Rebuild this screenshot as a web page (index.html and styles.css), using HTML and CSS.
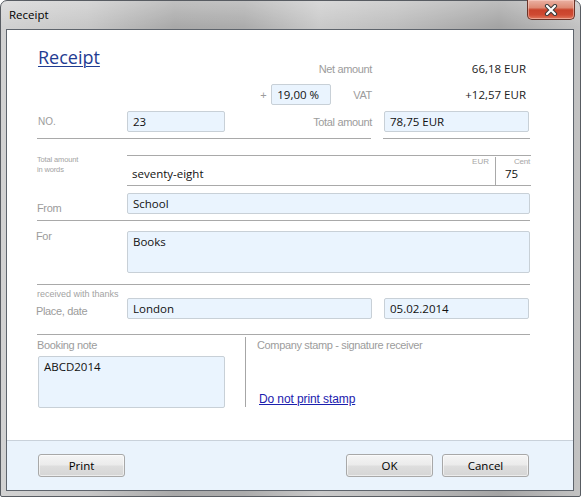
FILE: index.html
```html
<!DOCTYPE html>
<html>
<head>
<meta charset="utf-8">
<title>Receipt</title>
<link rel="stylesheet" href="styles.css">
</head>
<body>
<div class="window">
  <div class="titlebar">
    <span class="title">Receipt</span>
    <button class="close" type="button" aria-label="Close">
      <svg width="14" height="12" viewBox="0 0 14 12">
        <path d="M3 2 L11 10 M11 2 L3 10" stroke="#3b3b3b" stroke-width="4.2" stroke-linecap="round" fill="none"/>
        <path d="M3 2 L11 10 M11 2 L3 10" stroke="#ffffff" stroke-width="2.2" stroke-linecap="round" fill="none"/>
      </svg>
    </button>
  </div>
  <div class="client">
    <div class="main">
      <div class="row r1">
        <div class="left">
          <a class="heading" href="#">Receipt</a>
          <span class="label net">Net amount</span>
        </div>
        <div class="right value">66,18 EUR</div>
      </div>
      <div class="row r2">
        <div class="left">
          <span class="label plus">+</span>
          <div class="field vat-field">19,00 %</div>
          <span class="label vat">VAT</span>
        </div>
        <div class="right value">+12,57 EUR</div>
      </div>
      <div class="row r3">
        <div class="left">
          <span class="label-col no">NO.</span>
          <div class="field no-field">23</div>
          <span class="label total">Total amount</span>
        </div>
        <div class="right"><div class="field total-field">78,75 EUR</div></div>
      </div>
      <div class="row r4">
        <div class="rule rule-left"></div>
        <div class="rule rule-right"></div>
      </div>
      <div class="words">
        <div class="tiny">Total amount<br>in words</div>
        <div class="words-box">
          <div class="words-main">
            <span class="tiny-r">EUR</span>
            <span class="words-text">seventy-eight</span>
          </div>
          <div class="words-cent">
            <span class="tiny-c">Cent</span>
            <span class="words-text">75</span>
          </div>
        </div>
      </div>
      <div class="line-row from-row">
        <span class="label from">From</span>
        <div class="field">School</div>
      </div>
      <div class="rule full r7"></div>
      <div class="line-row for-row">
        <span class="label for">For</span>
        <div class="field tall">Books</div>
      </div>
      <div class="rule full r9"></div>
      <div class="place-row">
        <div class="place-labels">
          <span class="thanks">received with thanks</span>
          <span class="label place">Place, date</span>
        </div>
        <div class="field city">London</div>
        <div class="field date">05.02.2014</div>
      </div>
      <div class="rule full r11"></div>
      <div class="bottom">
        <div class="booking">
          <span class="label">Booking note</span>
          <div class="field note">ABCD2014</div>
        </div>
        <div class="stamp">
          <span class="label">Company stamp - signature receiver</span>
          <a class="stamp-link" href="#">Do not print stamp</a>
        </div>
      </div>
    </div>
    <div class="footer">
      <button class="btn" type="button">Print</button>
      <button class="btn ok" type="button">OK</button>
      <button class="btn" type="button">Cancel</button>
    </div>
  </div>
</div>
</body>
</html>
```
FILE: styles.css
```css
* { box-sizing: border-box; }
html, body { margin: 0; padding: 0; }
body {
  width: 581px;
  height: 497px;
  overflow: hidden;
  background: #ffffff;
  font-family: "Open Sans", "Noto Sans", sans-serif;
}

.window {
  width: 581px;
  height: 497px;
  border: 1px solid #585c62;
  border-radius: 7px 7px 2px 2px;
  padding: 0 6px 5px 5px;
  display: flex;
  flex-direction: column;
  background:
    linear-gradient(180deg, rgba(255,255,255,0.28) 0, rgba(255,255,255,0) 26px),
    linear-gradient(90deg, #d2d2d2 0%, #c7c7c7 15%, #a9a9a9 30%, #acacac 42%, #cacaca 55%, #bebebe 68%, #a4a4a4 86%, #c3c3c3 100%);
}

.titlebar {
  height: 28px;
  flex: none;
  display: flex;
  align-items: center;
  padding-left: 3px;
}
.title {
  font-size: 11.5px;
  line-height: 16px;
  color: #000;
}
.close {
  margin-left: auto;
  margin-right: -1px;
  align-self: flex-start;
  margin-top: -1px;
  width: 48px;
  height: 20px;
  padding: 0;
  border: 1px solid #6a3328;
  border-top: none;
  border-radius: 0 0 5px 5px;
  background: linear-gradient(180deg, #eab1a3 0%, #de8a74 40%, #c9432b 52%, #cf4a32 78%, #e0795d 100%);
  box-shadow: inset 0 0 0 1px rgba(255,220,210,0.45);
  display: flex;
  align-items: center;
  justify-content: center;
}
.close svg { display: block; }

.client {
  height: 462px;
  flex: none;
  border: 1px solid #5e646c;
  background: #ffffff;
  display: flex;
  flex-direction: column;
}

.main {
  height: 410px;
  flex: none;
  padding: 16px 42px 0 30px;
}

.label {
  font-family: "Liberation Sans", Arial, sans-serif;
  font-size: 11px;
  line-height: 14px;
  letter-spacing: -0.35px;
  color: #9c9c9c;
  white-space: nowrap;
}
.value {
  font-size: 11.5px;
  line-height: 14px;
  color: #222;
  text-align: right;
  padding-right: 4px;
  white-space: nowrap;
}

.row { display: flex; gap: 12px; }
.left { width: 335px; display: flex; }
.right { width: 146px; }

.r1 { height: 30px; align-items: flex-end; }
.r1 .left { height: 30px; align-items: flex-end; }
.heading {
  align-self: flex-start;
  font-size: 18px;
  line-height: 22px;
  color: #1f3c92;
  text-decoration: underline;
  text-decoration-thickness: 1px;
  text-underline-offset: 2px;
  margin-left: 1px;
}
.net { margin-left: auto; }

.r2 { height: 21px; margin-top: 8px; align-items: center; }
.r2 .left { justify-content: flex-end; align-items: center; }
.plus { margin-right: 5px; }
.vat-field { width: 60px; }
.vat { margin-left: 22px; }

.r3 { height: 21px; margin-top: 6px; align-items: center; }
.r3 .left { align-items: center; }
.label-col { width: 90px; flex: none; }
.no {
  font-family: "Liberation Sans", Arial, sans-serif;
  font-size: 10px;
  color: #9c9c9c;
  padding-left: 1px;
}
.no-field { width: 98px; flex: none; }
.total { flex: 1; text-align: right; }
.total-field { width: 145px; }

.field {
  height: 21px;
  background: #eaf4fe;
  border: 1px solid #c8d0d7;
  border-radius: 2px;
  padding: 0 4px 0 5px;
  font-size: 11.5px;
  line-height: 19px;
  color: #111;
  white-space: nowrap;
  overflow: hidden;
}
.field.tall {
  height: 42px;
  line-height: 14px;
  padding-top: 3px;
}

.rule { height: 1px; background: #a9a9a9; }
.r4 { margin-top: 6px; height: 1px; }
.rule-left { width: 334px; }
.rule-right { width: 147px; }
.full { width: 493px; }

.words {
  display: grid;
  grid-template-columns: 90px 1fr;
  margin-top: 16px;
}
.tiny {
  font-family: "Liberation Sans", Arial, sans-serif;
  font-size: 7.5px;
  line-height: 10px;
  letter-spacing: -0.15px;
  color: #a3a3a3;
}
.words-box {
  height: 31px;
  border-top: 1px solid #a9a9a9;
  border-bottom: 1px solid #a9a9a9;
  display: flex;
}
.words-main {
  flex: 1;
  display: flex;
  flex-direction: column;
  padding: 1px 6px 0 5px;
}
.tiny-r, .tiny-c {
  font-family: "Liberation Sans", Arial, sans-serif;
  font-size: 8px;
  line-height: 10px;
  color: #a6a6a6;
  white-space: nowrap;
}
.tiny-r { align-self: flex-end; }
.tiny-c { padding-left: 9px; letter-spacing: -0.2px; }
.words-text {
  font-size: 11.5px;
  line-height: 14px;
  color: #111;
}
.words-cent {
  width: 36px;
  flex: none;
  margin-top: 1px;
  border-left: 1px solid #a9a9a9;
  display: flex;
  flex-direction: column;
  padding-left: 9px;
}
.words-cent .tiny-c { margin-left: -9px; padding-left: 18px; }

.line-row {
  display: grid;
  grid-template-columns: 90px 403px;
}
.from-row { margin-top: 7px; }
.from { align-self: end; margin-bottom: -1px; }
.r7 { margin-top: 6px; }
.for-row { margin-top: 10px; }
.for { align-self: start; margin-top: -2px; margin-left: -1px; }
.r9 { margin-top: 11px; }

.place-row {
  display: flex;
  height: 34px;
}
.place-labels {
  width: 90px;
  flex: none;
  display: flex;
  flex-direction: column;
  padding-top: 4px;
}
.thanks {
  font-family: "Liberation Sans", Arial, sans-serif;
  font-size: 9px;
  line-height: 11px;
  color: #a3a3a3;
  white-space: nowrap;
}
.place { margin-top: 4px; margin-left: -1px; }
.city { width: 245px; margin-top: 13px; }
.date { width: 145px; margin-top: 13px; margin-left: 12px; }
.r11 { margin-top: 15px; }

.bottom {
  display: grid;
  grid-template-columns: 208px 1fr;
}
.booking {
  display: flex;
  flex-direction: column;
  padding-top: 3px;
}
.note {
  margin-top: 4px;
  margin-left: 1px;
  width: 187px;
  height: 52px;
  line-height: 14px;
  padding-top: 3px;
  padding-left: 5px;
}
.stamp {
  margin-top: 2px;
  height: 70px;
  border-left: 1px solid #a6a6a6;
  padding: 1px 0 1px 11px;
  display: flex;
  flex-direction: column;
  justify-content: space-between;
}
.stamp-link {
  font-family: "Liberation Sans", Arial, sans-serif;
  font-size: 12px;
  line-height: 14px;
  letter-spacing: -0.1px;
  color: #1b20ae;
  text-decoration: underline;
  padding-left: 2px;
}

.footer {
  flex: 1;
  border-top: 1px solid #c9d1da;
  background: #eaf3fc;
  display: flex;
  align-items: flex-start;
  gap: 9px;
  padding: 13px 44px 0 31px;
}
.btn {
  width: 87px;
  height: 23px;
  padding: 0;
  border: 1px solid #a8a8a8;
  border-radius: 3px;
  background: linear-gradient(180deg, #f5f5f5 0%, #ebebeb 48%, #dedede 52%, #d5d5d5 100%);
  box-shadow: inset 0 0 0 1px rgba(255,255,255,0.55);
  font-family: "Open Sans", "Noto Sans", sans-serif;
  font-size: 11.5px;
  line-height: 20px;
  color: #000;
}
.ok { margin-left: auto; }
```
